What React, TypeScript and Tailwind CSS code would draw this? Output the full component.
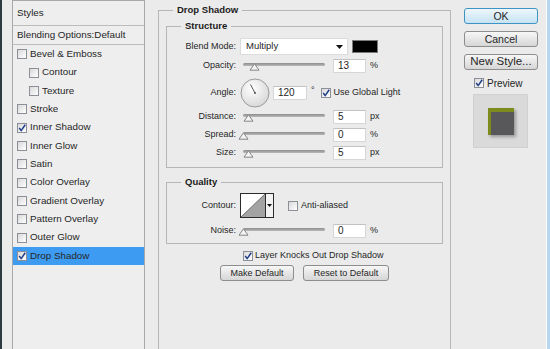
import type { ReactNode } from "react";

const layers = [
  { label: "Bevel & Emboss" },
  { label: "Contour", indent: true },
  { label: "Texture", indent: true },
  { label: "Stroke" },
  { label: "Inner Shadow", checked: true },
  { label: "Inner Glow" },
  { label: "Satin" },
  { label: "Color Overlay" },
  { label: "Gradient Overlay" },
  { label: "Pattern Overlay" },
  { label: "Outer Glow" },
  { label: "Drop Shadow", checked: true, active: true },
];

function Check({ checked = false }: { checked?: boolean }) {
  return (
    <div className="relative w-[10px] h-[10px] shrink-0 border border-[#8c9096] bg-gradient-to-br from-[#d9d9d9] to-white">
      {checked && (
        <svg className="absolute -left-px -top-px" width="10" height="10" viewBox="0 0 10 10">
          <path d="M2.2 5 L4.2 7.6 L8.2 1.8" fill="none" stroke="#1f3d86" strokeWidth="1.5" />
        </svg>
      )}
    </div>
  );
}

function Field({ value, w = "w-[33px]" }: { value: string; w?: string }) {
  return (
    <div className={`${w} h-[14px] bg-white border border-[#d6d6d6] border-t-[#c2c2c2] pl-[4px] leading-[12px] text-[10px]`}>
      {value}
    </div>
  );
}

function Slider({ pos }: { pos: number }) {
  return (
    <div className="relative w-[88px] h-[14px] shrink-0">
      <div className="absolute left-[3px] top-[4px] w-[82px] h-[3px] rounded-full bg-gradient-to-b from-[#8d8d8d] to-[#b9b9b9]" />
      <svg className="absolute top-[4px]" style={{ left: 3 + pos - 5 }} width="11" height="8" viewBox="0 0 11 8">
        <path d="M5.5 0.8 L10 7.2 L1 7.2 Z" fill="#f4f4f4" stroke="#858585" strokeWidth="1" />
      </svg>
    </div>
  );
}

function Row({ label, className = "", children }: { label: string; className?: string; children: ReactNode }) {
  return (
    <div className={`flex items-center ${className}`}>
      <div className="w-[69px] text-right shrink-0">{label}</div>
      <div className="ml-[4px] flex items-center">{children}</div>
    </div>
  );
}

function Group({ title, className = "", children }: { title: string; className?: string; children: ReactNode }) {
  return (
    <fieldset className={`border border-[#b6b6b6] ${className}`}>
      <legend className="ml-[14px] px-[4px] font-bold text-[9.5px] leading-[14px] text-[#1b1b1b]">{title}</legend>
      {children}
    </fieldset>
  );
}

function Btn({ label, w, primary = false, size = "text-[9px]" }: { label: string; w: string; primary?: boolean; size?: string }) {
  return (
    <div
      className={`${w} ${size} h-[16px] rounded-[3px] border flex items-center justify-center leading-none ${
        primary
          ? "border-[#3e94c4] bg-gradient-to-b from-[#eef7fc] to-[#c6e3f3]"
          : "border-[#8d8d8d] bg-gradient-to-b from-[#f7f7f7] to-[#d6d6d6]"
      }`}
    >
      {label}
    </div>
  );
}

export default function App() {
  return (
    <div className="w-[550px] h-[349px] overflow-hidden flex bg-[#ebebeb] text-[#262626] font-['Liberation_Sans',Arial,sans-serif]">
      <div className="w-[2px] shrink-0 bg-[#2d3b40]" />

      {/* styles list */}
      <div className="pl-[10px] shrink-0 text-[9.8px]">
        <div className="w-[133px] h-[380px] border border-[#a9a9a9] bg-[#eeeeee]">
          <div className="h-[25px] border-b border-[#bcbcbc] pl-[4px] flex items-center">Styles</div>
          <div className="h-[19px] border-b border-[#bcbcbc] pl-[4px] flex items-center">Blending Options:Default</div>
          {layers.map((l) => (
            <div
              key={l.label}
              className={`h-[18.35px] flex items-center ${l.indent ? "pl-[16px]" : "pl-[4px]"} ${
                l.active ? "bg-[#3d9cf2]" : ""
              }`}
            >
              <Check checked={l.checked} />
              <span className="ml-[3px]">{l.label}</span>
            </div>
          ))}
        </div>
      </div>

      {/* drop shadow settings */}
      <div className="ml-[13px] w-[293px] shrink-0 pt-[3px] text-[9px]">
        <Group title="Drop Shadow" className="h-[380px]">
          <div className="pl-[7px] pr-[7px]">
            <Group title="Structure" className="mt-[2px]">
              <div className="pb-[7px]">
                <Row label="Blend Mode:" className="mt-[5px] h-[17px]">
                  <div className="w-[108px] h-[17px] bg-white border border-[#dcdcdc] flex items-center justify-between pl-[5px] pr-[4px] text-[9.5px]">
                    <span>Multiply</span>
                    <svg width="7" height="4" viewBox="0 0 7 4">
                      <path d="M0 0 H7 L3.5 4 Z" fill="#111" />
                    </svg>
                  </div>
                  <div className="ml-[4px] w-[26px] h-[13px] bg-black border border-[#7a7a7a]" />
                </Row>
                <Row label="Opacity:" className="mt-[4px] h-[14px]">
                  <Slider pos={11} />
                  <div className="ml-[5px]"><Field value="13" /></div>
                  <span className="ml-[4px]">%</span>
                </Row>
                <Row label="Angle:" className="mt-[5px] h-[30px]">
                  <svg width="30" height="30" viewBox="0 0 30 30">
                    <defs>
                      <radialGradient id="dial" cx="40%" cy="35%" r="70%">
                        <stop offset="0" stopColor="#ffffff" />
                        <stop offset="1" stopColor="#d6d6d6" />
                      </radialGradient>
                    </defs>
                    <circle cx="15" cy="15" r="14" fill="url(#dial)" stroke="#9b9b9b" />
                    <line x1="15" y1="15" x2="10.5" y2="6.5" stroke="#555" strokeWidth="1" />
                    <circle cx="15" cy="15" r="1" fill="#555" />
                  </svg>
                  <div className="ml-[3px]"><Field value="120" w="w-[34px]" /></div>
                  <span className="ml-[4px] -mt-[4px]">°</span>
                  <div className="ml-[6px]"><Check checked /></div>
                  <span className="ml-[3px]">Use Global Light</span>
                </Row>
                <Row label="Distance:" className="mt-[2px] h-[14px]">
                  <Slider pos={5} />
                  <div className="ml-[5px]"><Field value="5" /></div>
                  <span className="ml-[4px]">px</span>
                </Row>
                <Row label="Spread:" className="mt-[4px] h-[14px]">
                  <Slider pos={0} />
                  <div className="ml-[5px]"><Field value="0" /></div>
                  <span className="ml-[4px]">%</span>
                </Row>
                <Row label="Size:" className="mt-[4px] h-[14px]">
                  <Slider pos={5} />
                  <div className="ml-[5px]"><Field value="5" /></div>
                  <span className="ml-[4px]">px</span>
                </Row>
              </div>
            </Group>

            <Group title="Quality" className="mt-[7px]">
              <div className="pb-[5px]">
                <Row label="Contour:" className="mt-[4px] h-[25px]">
                  <div className="w-[34px] h-[25px] border border-[#2a2a2a] bg-white flex">
                    <svg width="24" height="23" viewBox="0 0 24 23">
                      <path d="M0 23 L24 0 L24 23 Z" fill="#a3a3a3" />
                      <path d="M0 23 L24 0" stroke="#555" strokeWidth="0.8" />
                    </svg>
                    <div className="flex-1 border-l border-[#2a2a2a] bg-[#f2f2f2] flex items-center justify-center">
                      <svg width="5" height="3" viewBox="0 0 5 3">
                        <path d="M0 0 H5 L2.5 3 Z" fill="#111" />
                      </svg>
                    </div>
                  </div>
                  <div className="ml-[14px]"><Check /></div>
                  <span className="ml-[3px]">Anti-aliased</span>
                </Row>
                <Row label="Noise:" className="mt-[5px] h-[15px]">
                  <Slider pos={0} />
                  <div className="ml-[5px]"><Field value="0" /></div>
                  <span className="ml-[4px]">%</span>
                </Row>
              </div>
            </Group>

            <div className="mt-[5px] h-[14px] pl-[77px] flex items-center">
              <Check checked />
              <span className="ml-[2px]">Layer Knocks Out Drop Shadow</span>
            </div>
            <div className="mt-[2px] flex justify-center gap-[9px]">
              <Btn label="Make Default" w="w-[74px]" />
              <Btn label="Reset to Default" w="w-[86px]" />
            </div>
          </div>
        </Group>
      </div>

      {/* buttons + preview */}
      <div className="w-[95px] shrink-0 pl-[13px] pt-[8px] text-[10px]">
        <div className="flex flex-col gap-[7px]">
          <Btn label="OK" w="w-[74px]" primary size="text-[10.5px]" />
          <Btn label="Cancel" w="w-[74px]" size="text-[10.5px]" />
          <Btn label="New Style..." w="w-[74px]" size="text-[11.5px]" />
        </div>
        <div className="mt-[7px] ml-[10px] h-[12px] flex items-center">
          <Check checked />
          <span className="ml-[3px]">Preview</span>
        </div>
        <div className="mt-[5px] ml-[9px] w-[55px] h-[54px] bg-[#dadada] border border-[#d0d0d0] flex items-center justify-center">
          <div className="w-[26px] h-[27px] bg-[#58585a] shadow-[inset_3px_4px_0_#7d8a1c,2px_2px_3px_rgba(0,0,0,0.3)]" />
        </div>
      </div>

      <div className="w-[4px] shrink-0 border-l border-white bg-[#b6d7ef]" />
    </div>
  );
}
